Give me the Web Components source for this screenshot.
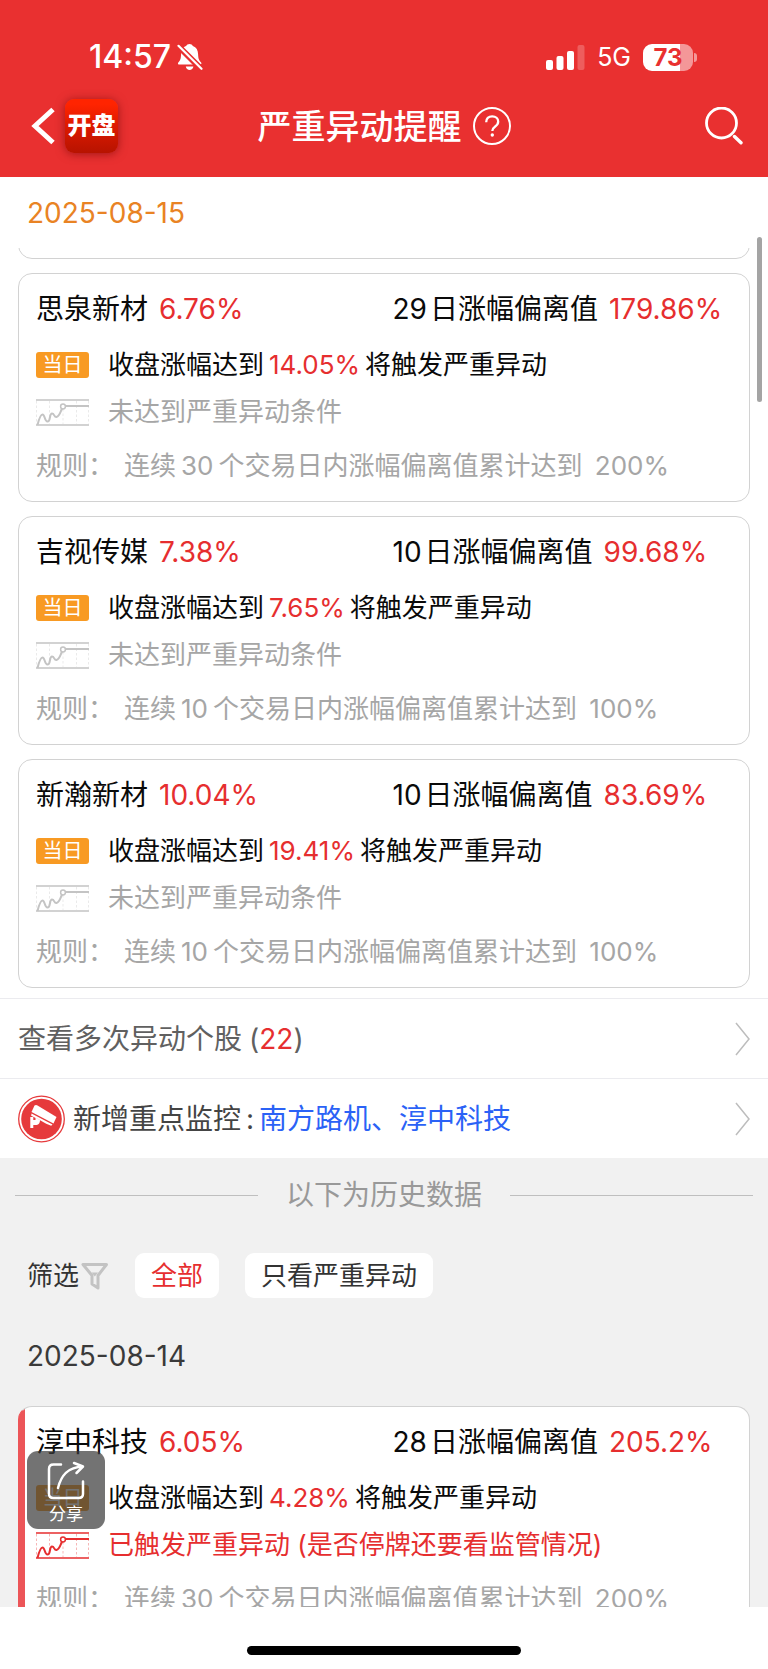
<!DOCTYPE html>
<html lang="zh-CN">
<head>
<meta charset="utf-8">
<meta name="viewport" content="width=device-width, initial-scale=1">
<title>严重异动提醒</title>
<style>
  html, body { margin: 0; height: 100%; }
  body {
    --red: #e62e2f;
    --line: #d2d2d2;
    font-family: Inter, "Noto Sans CJK SC", sans-serif;
    font-size: 28px;
    line-height: 40px;
    color: #000;
    background: #fff;
  }
</style>
</head>
<body>
<alert-app></alert-app>

<script>
const define = (name, html, render) => {
  const template = document.createElement('template');
  template.innerHTML = html;
  customElements.define(name, class extends HTMLElement {
    constructor() {
      super();
      this.attachShadow({ mode: 'open' }).append(template.content.cloneNode(true));
    }
    connectedCallback() {
      if (render) render(this, this.shadowRoot);
    }
  });
};

/* Phone status line */
define('status-bar', `
<style>
  :host { display: flex; align-items: center; justify-content: space-between; height: 36px; padding: 0 71px 0 89px; color: #fff; }
  .side { display: flex; align-items: center; }
  .time { font-size: 32px; font-weight: 500; margin-right: 6px; }
  .net { font-size: 25px; margin: 0 12px; }
  .battery { width: 50px; height: 27px; border-radius: 9px; text-align: center; font-size: 24px; line-height: 27px; font-weight: 700; color: #e93030;
    background: linear-gradient(90deg, #fff 73%, #f49798 73%); }
  .nub { width: 3px; height: 9px; margin-left: 1px; border-radius: 0 3px 3px 0; background: #f49798; }
  svg { display: block; }
</style>
<div class="side">
  <span class="time">14:57</span>
  <svg width="26" height="28" viewBox="0 0 26 28" fill="#fff" aria-label="静音">
    <path d="M12.5 1c1.600 0 2.800.8 3.400 2 3.500 1.200 5.100 4.200 5.200 8.200.1 4.700 1.100 6.200 3 8.200.7.8.4 2.100-1 2.100H2.300c-1.400 0-1.700-1.300-1-2.100 1.900-2 2.600-3.500 2.800-8.200C4.200 7.200 5.600 4.200 9.100 3c.6-1.200 1.800-2 3.400-2z"/>
    <path d="M8.800 23.500h7.600c-.3 2.100-1.900 3.400-3.800 3.400s-3.500-1.300-3.800-3.400z"/>
    <path d="M1 2.800 24.500 26.300" stroke="#e93030" stroke-width="6"/>
    <path d="M1.500 2.800 24.500 25.800" stroke="#fff" stroke-width="2.200" stroke-linecap="round"/>
  </svg>
</div>
<div class="side">
  <svg width="39" height="25" viewBox="0 0 39 25" fill="#fff" aria-label="信号">
    <rect x="0" y="15" width="7" height="10" rx="2"/><rect x="10.500" y="11" width="7" height="14" rx="2"/>
    <rect x="21" y="6" width="7" height="19" rx="2"/><rect x="31.500" y="0" width="7" height="25" rx="2" opacity=".22"/>
  </svg>
  <span class="net">5G</span>
  <span class="battery">73</span><span class="nub"></span>
</div>`);

/* Page header: back, app mark, title with help, search */
define('nav-bar', `
<style>
  :host { display: grid; grid-template-columns: 1fr auto 1fr; align-items: center; height: 102px; padding: 0 25px; color: #fff; }
  .side, .title { display: flex; align-items: center; }
  .start { padding-left: 5px; }
  .end { justify-content: flex-end; }
  button { all: unset; display: block; cursor: pointer; }
  svg { display: block; }
  .logo { margin-left: 9px; width: 53px; height: 54px; border-radius: 9px; font-size: 24px; line-height: 54px; font-weight: 900; text-align: center;
    background: linear-gradient(#ff2400 10%, #dc1a00 50%, #b71300); box-shadow: 0 1px 10px rgba(100, 0, 0, .55); white-space: nowrap; }
  h1 { margin: 0 11px 0 0; padding-top: 2px; font-size: 34px; line-height: 48px; font-weight: 500; }
</style>
<div class="side start">
  <button aria-label="返回"><svg width="26" height="38" viewBox="0 0 26 38" fill="none" stroke="#fff" stroke-width="5"><path d="M23 2.500 5 19l18 16.500"/></svg></button>
  <span class="logo">开盘</span>
</div>
<div class="title">
  <h1>严重异动提醒</h1>
  <button aria-label="帮助"><svg width="38" height="38" viewBox="0 0 38 38" fill="none" stroke="#fff" stroke-width="2">
    <circle cx="19" cy="19" r="18"/>
    <path d="M13.200 15.200c0-3.500 2.300-5.900 6-5.900 3.600 0 6 2.300 6 5.300 0 2.200-1 3.500-3 4.900-2.200 1.600-2.900 2.500-2.900 4.600" stroke-width="2.300"/>
    <circle cx="19.300" cy="28" r="1.700" fill="#fff" stroke="none"/></svg></button>
</div>
<div class="side end">
  <button aria-label="搜索"><svg width="38" height="38" viewBox="0 0 38 38" fill="none" stroke="#fff">
    <circle cx="16.500" cy="16" r="15" stroke-width="2.800"/><path d="m29.500 29.500 6.500 6.300" stroke-width="3.400" stroke-linecap="round"/></svg></button>
</div>`);

/* One stock with its deviation figures; the default slot holds its trigger state */
define('stock-card', `
<style>
  :host { display: block; color: #0a0a0a; }
  article { box-sizing: border-box; padding: 15px 0 15px 17px; border: 1px solid var(--line); border-radius: 14px; background: #fff; }
  :host([hit]) article { border-left-color: #ec5558; background: linear-gradient(#ec5558, #ec5558) left / 7px 100% no-repeat border-box, #fff; }
  .head { display: grid; grid-template-columns: 1fr 1fr; margin-bottom: 16px; }
  .head > div { display: flex; gap: 11px; }
  h2 { margin: 0; font: inherit; }
  .days { margin-right: 3px; }
  .row { display: flex; align-items: center; font-size: 26px; }
  .today { margin-bottom: 7px; }
  .state { margin-bottom: 14px; color: #a6a6a6; }
  :host([hit]) .state { color: var(--red); }
  .rule { color: #a6a6a6; gap: 10px; }
  .badge { width: 53px; height: 26px; margin-right: 19px; border-radius: 3px; background: #f89a23; color: #fff; font-size: 20px; line-height: 26px; text-align: center; }
  svg { width: 53px; height: 27px; margin-right: 19px; fill: none; stroke: #c4c4c4; }
  :host([hit]) svg { stroke: var(--red); }
  .red { color: var(--red); }
  .num { margin: 0 5px; }
  .limit { margin-left: 5px; }
</style>
<article>
  <div class="head">
    <div><h2 data-f="name"></h2><span class="red" data-f="gain"></span></div>
    <div><span><span class="days" data-f="days"></span>日涨幅偏离值</span><span class="red" data-f="deviation"></span></div>
  </div>
  <div class="row today"><span class="badge">当日</span><span>收盘涨幅达到<span class="num red" data-f="trigger"></span>将触发严重异动</span></div>
  <div class="row state">
    <svg viewBox="0 0 53 27" aria-hidden="true">
      <path d="M0 1h53M0 26h53" stroke-width="1.300"/>
      <path d="M.5 2v23M13.500 2v23M27 10v15M40.500 2v23M52.500 2v23" stroke-dasharray="2.500 2" opacity=".35"/>
      <path d="M1.500 26C3 20 4.500 15.500 6.500 15.500c2.500 0 2 7 5 7 3.500 0 1.500-8 4.500-8 2.500 0 2 4 4.500 3.500 3-.6 3.500-4 5.500-8.500" stroke-width="2"/>
      <circle cx="27" cy="7.500" r="2.400" stroke-width="1.500"/><path d="M29.500 7H53" stroke-width="2"/>
    </svg><slot></slot>
  </div>
  <div class="row rule"><span>规则：</span><span>连续<span class="num" data-f="window"></span>个交易日内涨幅偏离值累计达到 <span class="limit" data-f="limit"></span></span></div>
</article>`, (host, root) => {
  for (const el of root.querySelectorAll('[data-f]')) el.textContent = host.getAttribute(el.dataset.f);
});

/* Full-width link with a trailing chevron */
define('link-row', `
<style>
  :host { display: block; border-top: 1px solid #ebebef; }
  a { display: flex; align-items: center; height: 79px; padding: 0 18px; color: inherit; text-decoration: none; }
  .chevron { margin-left: auto; }
  ::slotted(svg) { margin-right: 8px; }
  ::slotted(.count) { color: var(--red); }
  ::slotted(.open) { margin-left: 7px; }
  ::slotted(.colon) { margin: 0 5px; }
  ::slotted(.names) { color: #2b62f6; }
</style>
<a href="#"><slot></slot>
  <svg class="chevron" width="15" height="34" viewBox="0 0 15 34" fill="none" stroke="#bdbdbd" stroke-width="1.500" aria-hidden="true"><path d="M1 1l13 16L1 33"/></svg>
</a>`);

define('filter-bar', `
<style>
  :host { display: flex; align-items: center; padding: 0 27px; font-size: 26px; color: #333; }
  svg { margin: 0 27px 0 2px; }
  button { margin: 0 26px 0 0; border: 0; padding: 0 16px; height: 45px; border-radius: 9px; background: #fff; color: #333; font: inherit; line-height: 45px; cursor: pointer; }
  button[aria-pressed="true"] { color: var(--red); }
</style>
<span>筛选</span>
<svg width="27" height="28" viewBox="0 0 27 28" fill="none" stroke="#c3c3c3" stroke-width="3" stroke-linejoin="round" aria-hidden="true">
  <path d="M2 2.500h23.500l-8.500 11V26l-6-4V13.500z"/><path d="M10.500 10.500h6.500l-3.200 4z" fill="#c3c3c3" stroke="none"/></svg>
<button aria-pressed="true">全部</button><button aria-pressed="false">只看严重异动</button>`);

define('share-button', `
<style>
  :host { position: absolute; left: 27px; bottom: 140px; }
  button { display: flex; flex-direction: column; align-items: center; width: 78px; height: 78px; padding: 10px 0 0; border: 0; border-radius: 11px; background: rgba(55, 55, 55, .7); color: #fff; font: inherit; font-size: 17px; line-height: 28px; cursor: pointer; }
</style>
<button><svg width="38" height="39" viewBox="0 0 38 39" fill="none" stroke="#fff" stroke-width="2.500" stroke-linecap="round" stroke-linejoin="round" aria-hidden="true">
  <path d="M14 3.500H6.500q-4.500 0-4.500 4.500v25q0 4 4.500 4h25q4.500 0 4.500-4V20.500"/>
  <path d="M11 27C14 15 20 6.500 35 5.500M27 2l9 3.500-6.500 6.500"/></svg>分享</button>`);

define('alert-app', `
<style>
  :host { position: relative; display: flex; flex-direction: column; height: 100vh; overflow: hidden; }
  header { flex: none; padding-top: 39px; background: #e93030; }
  main { flex: 1; min-height: 0; overflow: hidden; }
  .current { position: relative; }
  time { display: block; padding: 0 27px; }
  .current time { padding-top: 16px; padding-bottom: 15px; color: #e98324; }
  .list { display: flex; flex-direction: column; gap: 14px; padding: 0 18px 10px; }
  /* Lower edge of the card that is scrolled under the date */
  .passed { display: flex; align-items: flex-end; height: 11px; overflow: hidden; }
  .passed i { flex: 1; box-sizing: border-box; height: 60px; border: 1px solid var(--line); border-radius: 14px; }
  .thumb { position: absolute; top: 60px; right: 6px; width: 5px; height: 165px; border-radius: 3px; background: #a4a4a4; }
  .more { color: #606060; }
  .watch { color: #444; }
  .history { background: #f1f1f1; }
  .split { display: flex; align-items: center; gap: 28px; padding: 17px 15px 0; color: #999; }
  .split::before, .split::after { content: ""; flex: 1; height: 1px; background: #bfbfbf; }
  filter-bar { margin-top: 38px; }
  .history time { padding-top: 38px; padding-bottom: 30px; color: #3a3a3a; }
  footer { flex: none; display: flex; justify-content: center; height: 23px; padding-top: 39px; background: #fff; }
  footer i { width: 274px; height: 9px; border-radius: 5px; background: #000; }
</style>
<header><status-bar></status-bar><nav-bar></nav-bar></header>
<main>
  <section class="current">
    <time datetime="2025-08-15">2025-08-15</time>
    <div class="list">
      <div class="passed"><i></i></div>
      <stock-card name="思泉新材" gain="6.76%" days="29" deviation="179.86%" trigger="14.05%" window="30" limit="200%">未达到严重异动条件</stock-card>
      <stock-card name="吉视传媒" gain="7.38%" days="10" deviation="99.68%" trigger="7.65%" window="10" limit="100%">未达到严重异动条件</stock-card>
      <stock-card name="新瀚新材" gain="10.04%" days="10" deviation="83.69%" trigger="19.41%" window="10" limit="100%">未达到严重异动条件</stock-card>
    </div>
    <div class="thumb"></div>
    <link-row class="more"><span>查看多次异动个股</span><span class="open">(</span><span class="count">22</span><span>)</span></link-row>
    <link-row class="watch">
      <svg width="47" height="48" viewBox="0 0 47 48" aria-hidden="true">
        <circle cx="23.500" cy="24" r="22.800" fill="#fff" stroke="#e63a3c" stroke-width="1.300"/><circle cx="23.500" cy="24" r="20.300" fill="#e63a3c"/>
        <path d="M16.500 10.500q1.500-.8 3 0L38.500 22l-3 6.500L13.500 17z" fill="#fff"/>
        <path d="M13.500 18.500 34.500 29.500l-1.300 1.200-5-2-7-4-8-4z" fill="#fff"/>
        <path d="M12.300 22h3v3h2.200v-2.500l4.500 2.500q0 4.500-3.500 5h-3.200v3h-3z" fill="#fff"/>
      </svg><span>新增重点监控</span><span class="colon">:</span><span class="names">南方路机、淳中科技</span></link-row>
  </section>
  <section class="history">
    <div class="split">以下为历史数据</div>
    <filter-bar></filter-bar>
    <time datetime="2025-08-14">2025-08-14</time>
    <div class="list">
      <stock-card hit name="淳中科技" gain="6.05%" days="28" deviation="205.2%" trigger="4.28%" window="30" limit="200%">已触发严重异动 (是否停牌还要看监管情况)</stock-card>
    </div>
  </section>
</main>
<footer><i></i></footer>
<share-button></share-button>`);
</script>
</body>
</html>
